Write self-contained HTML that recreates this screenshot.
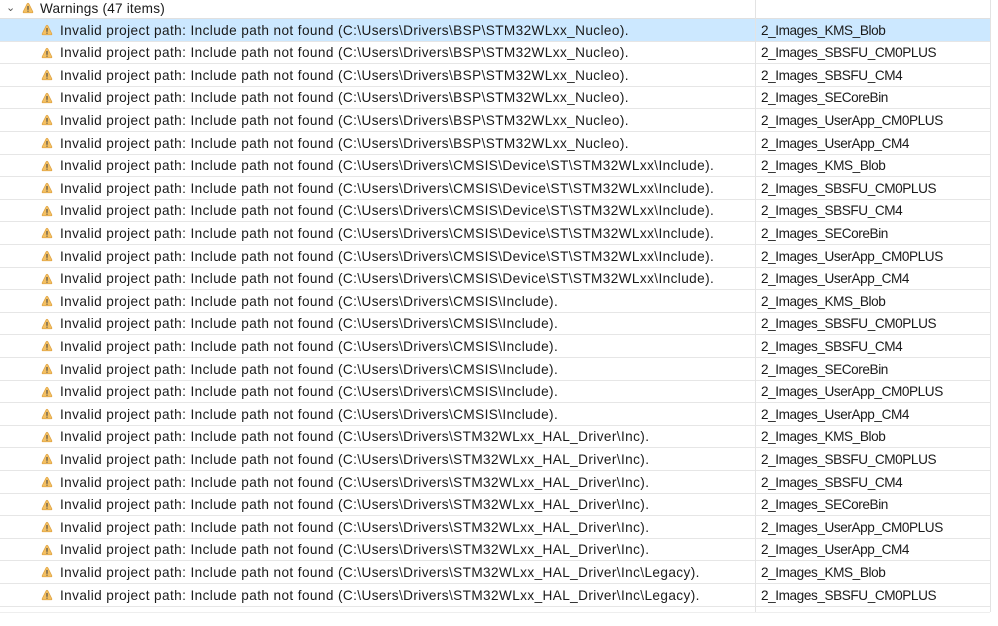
<!DOCTYPE html>
<html><head><meta charset="utf-8"><style>
body{margin:0;width:998px;height:626px;background:#fff;overflow:hidden;font-family:"Liberation Sans",sans-serif;font-size:13.6px;color:#1a1a1a;position:relative}
.r{position:absolute;left:0;width:990px;height:22.6px;border-bottom:1px solid #e6e6e6;box-sizing:border-box}
.sel{background:#cce8ff}
.t{position:absolute;left:60px;top:3.5px;white-space:nowrap;letter-spacing:0.4px}
.p{position:absolute;left:761px;top:3.5px;white-space:nowrap;letter-spacing:-0.42px}
.ic{position:absolute;left:41px;top:5px;width:12px;height:12px}
.vl{position:absolute;left:755px;top:0;width:1px;height:612px;background:#e3e3e3}
.vr{position:absolute;left:990px;top:0;width:1px;height:612px;background:#e3e3e3}
</style></head><body>
<svg width="0" height="0" style="position:absolute"><defs><g id="w"><path d="M6 1.2Q6.6 1.2 7 2L10.8 9.6Q11.2 10.8 10 10.8H2Q0.8 10.8 1.2 9.6L5 2Q5.4 1.2 6 1.2Z" fill="#f4c062" stroke="#dda040" stroke-width="0.7"/><rect x="5.45" y="4" width="1.1" height="3.8" fill="#444"/><rect x="5.45" y="8.6" width="1.1" height="1.1" fill="#444"/></g></defs></svg>
<div class="r" style="top:0;height:19px;border-bottom:1px solid #e0e0e0">
<span style="position:absolute;left:6px;top:1px;color:#555;font-size:11px">&#8964;</span>
<svg class="ic" style="left:22px;top:2px" viewBox="0 0 12 12"><use href="#w"/></svg>
<span class="t" style="left:40px;top:1px;letter-spacing:0.2px">Warnings (47 items)</span>
</div>
<div class="r sel" style="top:19px"><svg class="ic" viewBox="0 0 12 12"><use href="#w"/></svg><span class="t">Invalid project path: Include path not found (C:\Users\Drivers\BSP\STM32WLxx_Nucleo).</span><span class="p">2_Images_KMS_Blob</span></div>
<div class="r" style="top:41.6px"><svg class="ic" viewBox="0 0 12 12"><use href="#w"/></svg><span class="t">Invalid project path: Include path not found (C:\Users\Drivers\BSP\STM32WLxx_Nucleo).</span><span class="p">2_Images_SBSFU_CM0PLUS</span></div>
<div class="r" style="top:64.2px"><svg class="ic" viewBox="0 0 12 12"><use href="#w"/></svg><span class="t">Invalid project path: Include path not found (C:\Users\Drivers\BSP\STM32WLxx_Nucleo).</span><span class="p">2_Images_SBSFU_CM4</span></div>
<div class="r" style="top:86.8px"><svg class="ic" viewBox="0 0 12 12"><use href="#w"/></svg><span class="t">Invalid project path: Include path not found (C:\Users\Drivers\BSP\STM32WLxx_Nucleo).</span><span class="p">2_Images_SECoreBin</span></div>
<div class="r" style="top:109.4px"><svg class="ic" viewBox="0 0 12 12"><use href="#w"/></svg><span class="t">Invalid project path: Include path not found (C:\Users\Drivers\BSP\STM32WLxx_Nucleo).</span><span class="p">2_Images_UserApp_CM0PLUS</span></div>
<div class="r" style="top:132px"><svg class="ic" viewBox="0 0 12 12"><use href="#w"/></svg><span class="t">Invalid project path: Include path not found (C:\Users\Drivers\BSP\STM32WLxx_Nucleo).</span><span class="p">2_Images_UserApp_CM4</span></div>
<div class="r" style="top:154.6px"><svg class="ic" viewBox="0 0 12 12"><use href="#w"/></svg><span class="t">Invalid project path: Include path not found (C:\Users\Drivers\CMSIS\Device\ST\STM32WLxx\Include).</span><span class="p">2_Images_KMS_Blob</span></div>
<div class="r" style="top:177.2px"><svg class="ic" viewBox="0 0 12 12"><use href="#w"/></svg><span class="t">Invalid project path: Include path not found (C:\Users\Drivers\CMSIS\Device\ST\STM32WLxx\Include).</span><span class="p">2_Images_SBSFU_CM0PLUS</span></div>
<div class="r" style="top:199.8px"><svg class="ic" viewBox="0 0 12 12"><use href="#w"/></svg><span class="t">Invalid project path: Include path not found (C:\Users\Drivers\CMSIS\Device\ST\STM32WLxx\Include).</span><span class="p">2_Images_SBSFU_CM4</span></div>
<div class="r" style="top:222.4px"><svg class="ic" viewBox="0 0 12 12"><use href="#w"/></svg><span class="t">Invalid project path: Include path not found (C:\Users\Drivers\CMSIS\Device\ST\STM32WLxx\Include).</span><span class="p">2_Images_SECoreBin</span></div>
<div class="r" style="top:245px"><svg class="ic" viewBox="0 0 12 12"><use href="#w"/></svg><span class="t">Invalid project path: Include path not found (C:\Users\Drivers\CMSIS\Device\ST\STM32WLxx\Include).</span><span class="p">2_Images_UserApp_CM0PLUS</span></div>
<div class="r" style="top:267.6px"><svg class="ic" viewBox="0 0 12 12"><use href="#w"/></svg><span class="t">Invalid project path: Include path not found (C:\Users\Drivers\CMSIS\Device\ST\STM32WLxx\Include).</span><span class="p">2_Images_UserApp_CM4</span></div>
<div class="r" style="top:290.2px"><svg class="ic" viewBox="0 0 12 12"><use href="#w"/></svg><span class="t">Invalid project path: Include path not found (C:\Users\Drivers\CMSIS\Include).</span><span class="p">2_Images_KMS_Blob</span></div>
<div class="r" style="top:312.8px"><svg class="ic" viewBox="0 0 12 12"><use href="#w"/></svg><span class="t">Invalid project path: Include path not found (C:\Users\Drivers\CMSIS\Include).</span><span class="p">2_Images_SBSFU_CM0PLUS</span></div>
<div class="r" style="top:335.4px"><svg class="ic" viewBox="0 0 12 12"><use href="#w"/></svg><span class="t">Invalid project path: Include path not found (C:\Users\Drivers\CMSIS\Include).</span><span class="p">2_Images_SBSFU_CM4</span></div>
<div class="r" style="top:358px"><svg class="ic" viewBox="0 0 12 12"><use href="#w"/></svg><span class="t">Invalid project path: Include path not found (C:\Users\Drivers\CMSIS\Include).</span><span class="p">2_Images_SECoreBin</span></div>
<div class="r" style="top:380.6px"><svg class="ic" viewBox="0 0 12 12"><use href="#w"/></svg><span class="t">Invalid project path: Include path not found (C:\Users\Drivers\CMSIS\Include).</span><span class="p">2_Images_UserApp_CM0PLUS</span></div>
<div class="r" style="top:403.2px"><svg class="ic" viewBox="0 0 12 12"><use href="#w"/></svg><span class="t">Invalid project path: Include path not found (C:\Users\Drivers\CMSIS\Include).</span><span class="p">2_Images_UserApp_CM4</span></div>
<div class="r" style="top:425.8px"><svg class="ic" viewBox="0 0 12 12"><use href="#w"/></svg><span class="t">Invalid project path: Include path not found (C:\Users\Drivers\STM32WLxx_HAL_Driver\Inc).</span><span class="p">2_Images_KMS_Blob</span></div>
<div class="r" style="top:448.4px"><svg class="ic" viewBox="0 0 12 12"><use href="#w"/></svg><span class="t">Invalid project path: Include path not found (C:\Users\Drivers\STM32WLxx_HAL_Driver\Inc).</span><span class="p">2_Images_SBSFU_CM0PLUS</span></div>
<div class="r" style="top:471px"><svg class="ic" viewBox="0 0 12 12"><use href="#w"/></svg><span class="t">Invalid project path: Include path not found (C:\Users\Drivers\STM32WLxx_HAL_Driver\Inc).</span><span class="p">2_Images_SBSFU_CM4</span></div>
<div class="r" style="top:493.6px"><svg class="ic" viewBox="0 0 12 12"><use href="#w"/></svg><span class="t">Invalid project path: Include path not found (C:\Users\Drivers\STM32WLxx_HAL_Driver\Inc).</span><span class="p">2_Images_SECoreBin</span></div>
<div class="r" style="top:516.2px"><svg class="ic" viewBox="0 0 12 12"><use href="#w"/></svg><span class="t">Invalid project path: Include path not found (C:\Users\Drivers\STM32WLxx_HAL_Driver\Inc).</span><span class="p">2_Images_UserApp_CM0PLUS</span></div>
<div class="r" style="top:538.8px"><svg class="ic" viewBox="0 0 12 12"><use href="#w"/></svg><span class="t">Invalid project path: Include path not found (C:\Users\Drivers\STM32WLxx_HAL_Driver\Inc).</span><span class="p">2_Images_UserApp_CM4</span></div>
<div class="r" style="top:561.4px"><svg class="ic" viewBox="0 0 12 12"><use href="#w"/></svg><span class="t">Invalid project path: Include path not found (C:\Users\Drivers\STM32WLxx_HAL_Driver\Inc\Legacy).</span><span class="p">2_Images_KMS_Blob</span></div>
<div class="r" style="top:584px"><svg class="ic" viewBox="0 0 12 12"><use href="#w"/></svg><span class="t">Invalid project path: Include path not found (C:\Users\Drivers\STM32WLxx_HAL_Driver\Inc\Legacy).</span><span class="p">2_Images_SBSFU_CM0PLUS</span></div>
<div class="r" style="top:606.6px;height:6px;border-bottom:1px solid #eee"></div>
<div class="vl"></div><div class="vr"></div>
</body></html>
